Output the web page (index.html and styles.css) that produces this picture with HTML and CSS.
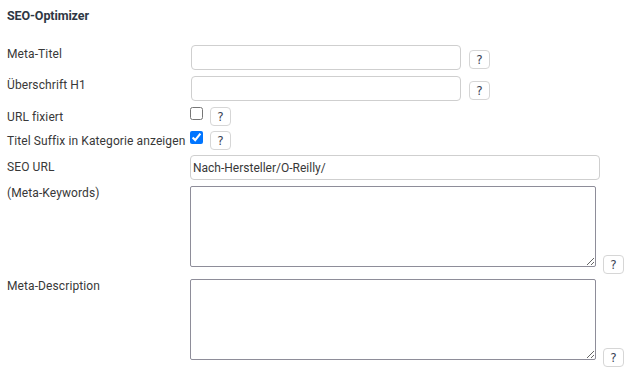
FILE: index.html
```html
<!DOCTYPE html>
<html lang="de">
<head>
<meta charset="utf-8">
<title>SEO-Optimizer</title>
<link rel="stylesheet" href="styles.css">
</head>
<body>
<h3 class="title">SEO-Optimizer</h3>
<div class="form">
  <div class="row r-input">
    <label class="lbl">Meta-Titel</label>
    <div class="field end">
      <input class="text short" type="text">
      <span class="help">?</span>
    </div>
  </div>
  <div class="row r-input">
    <label class="lbl">Überschrift H1</label>
    <div class="field end">
      <input class="text short" type="text">
      <span class="help">?</span>
    </div>
  </div>
  <div class="row r-check">
    <label class="lbl">URL fixiert</label>
    <div class="field start">
      <input class="check" type="checkbox">
      <span class="help">?</span>
    </div>
  </div>
  <div class="row r-check tight">
    <label class="lbl">Titel Suffix in Kategorie anzeigen</label>
    <div class="field start">
      <input class="check" type="checkbox" checked>
      <span class="help">?</span>
    </div>
  </div>
  <div class="row r-url tight">
    <label class="lbl">SEO URL</label>
    <div class="field">
      <input class="text long" type="text" value="Nach-Hersteller/O-Reilly/">
    </div>
  </div>
  <div class="row r-area">
    <label class="lbl">(Meta-Keywords)</label>
    <div class="field end">
      <textarea class="area"></textarea>
      <span class="help">?</span>
    </div>
  </div>
  <div class="row r-area tight">
    <label class="lbl">Meta-Description</label>
    <div class="field end">
      <textarea class="area"></textarea>
      <span class="help">?</span>
    </div>
  </div>
</div>
</body>
</html>
```

FILE: styles.css
```css
body {
  margin: 0;
  padding: 8px 7px;
  font-family: Roboto, "Liberation Sans", sans-serif;
  font-size: 12px;
  letter-spacing: 0.1px;
  color: #383838;
  background: #fff;
}

.title {
  margin: 0 0 21px;
  font-size: 12.5px;
  line-height: 16px;
  letter-spacing: -0.1px;
  font-weight: bold;
  color: #2e3744;
}

.form {
  display: flex;
  flex-direction: column;
}

.row {
  display: grid;
  grid-template-columns: 183px 1fr;
}

.row + .row {
  margin-top: 6px;
}

.row.tight {
  margin-top: 5px;
}

.lbl {
  line-height: 14px;
  margin-top: 2px;
  color: #383838;
}

.r-check .lbl {
  margin-top: 3px;
}

.r-url .lbl {
  margin-top: 5px;
}

.r-area .lbl {
  margin-top: 0;
}

.field {
  display: flex;
  gap: 8px;
}

.field.end {
  align-items: flex-end;
}

.field.start {
  align-items: flex-start;
  gap: 7px;
}

.r-area .field {
  gap: 7px;
}

.text {
  box-sizing: border-box;
  height: 25px;
  margin: 0;
  padding: 0 2px;
  border: 1px solid #cfcfcf;
  border-radius: 4px;
  font-family: inherit;
  font-size: 12px;
  color: #383838;
  background: #fff;
  outline: none;
}

.text.short {
  width: 270px;
  margin-left: 1px;
}

.field.end .text.short + .help {
  margin-bottom: 1px;
}

.text.long {
  width: 410px;
}

.check {
  width: 13px;
  height: 13px;
  margin: 0;
  accent-color: #0075ff;
}

.area {
  box-sizing: border-box;
  width: 406px;
  height: 81px;
  margin: 0 0 7px;
  padding: 2px;
  border: 1px solid #8e8d99;
  border-radius: 2px;
  font-family: inherit;
  font-size: 12px;
  background: #fff;
  outline: none;
}

.help {
  box-sizing: border-box;
  width: 21px;
  height: 19px;
  flex: none;
  display: flex;
  align-items: center;
  justify-content: center;
  border: 1px solid #d6d6d6;
  border-radius: 4px;
  background: #fff;
  font-family: "DejaVu Sans", sans-serif;
  font-size: 12px;
  line-height: 1;
  color: #3b4455;
}
```
